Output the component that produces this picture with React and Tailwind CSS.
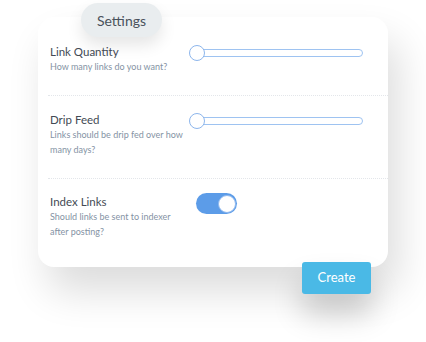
export default function App() {
  const rows = [
    { title: "Link Quantity", sub: ["How many links do you want?"], control: "slider" },
    { title: "Drip Feed", sub: ["Links should be drip fed over how", "many days?"], control: "slider" },
    { title: "Index Links", sub: ["Should links be sent to indexer", "after posting?"], control: "toggle" },
  ];

  const Slider = () => (
    <div className="relative w-[174px] h-[16px]">
      <div className="absolute left-[8px] right-0 top-[4px] h-[8px] rounded-full border-[1.5px] border-[#9ec3f1] bg-white" />
      <div className="absolute left-0 top-0 w-[16px] h-[16px] rounded-full border-[1.5px] border-[#8db6ec] bg-white" />
    </div>
  );

  const Toggle = () => (
    <div className="flex items-center justify-end w-[41px] h-[21px] rounded-full bg-[#5c9ce8] pr-[1.5px] mt-[-2px] ml-[7px]">
      <div className="w-[18px] h-[18px] rounded-full bg-white border border-[#8fb8ee]" />
    </div>
  );

  return (
    <div className="relative w-[426px] h-[342px] overflow-hidden bg-white" style={{ fontFamily: "Lato, 'Noto Sans', sans-serif" }}>
      <div className="ml-[38px] mt-[17px] w-[350px] h-[250px] rounded-[16px] bg-white shadow-[10px_24px_40px_rgba(0,0,0,0.14)] flex flex-col">
        {rows.map((row, i) => (
          <div key={row.title} className={i === 0 ? "pt-[28px] h-[78px]" : i === 1 ? "pt-[17px] h-[83px] border-t border-dotted border-[#e3e6ea] ml-[10px]" : "pt-[16px] border-t border-dotted border-[#e3e6ea] ml-[10px]"}>
            <div className={`flex ${i === 0 ? "pl-[12px]" : "pl-[2px]"}`}>
              <div className="w-[139px] whitespace-nowrap">
                <div className="text-[11.5px] leading-[14px] text-[#434a54]">{row.title}</div>
                <div className="text-[9px] leading-[15px] text-[#8593a4]">
                  {row.sub.map((s) => (
                    <div key={s}>{s}</div>
                  ))}
                </div>
              </div>
              <div>{row.control === "slider" ? <Slider /> : <Toggle />}</div>
            </div>
          </div>
        ))}
      </div>

      <div className="absolute left-[81px] top-[3px] w-[81px] h-[34px] rounded-full bg-[#e9edef] shadow-[0_8px_16px_rgba(0,0,0,0.1)] flex items-center justify-center text-[14px] text-[#4a525c]">
        Settings
      </div>

      <button className="absolute left-[302px] top-[262px] w-[69px] h-[32px] rounded-[3px] bg-[#4ab9e6] text-white text-[13px] shadow-[0_20px_30px_rgba(0,0,0,0.2)]">
        Create
      </button>
    </div>
  );
}
